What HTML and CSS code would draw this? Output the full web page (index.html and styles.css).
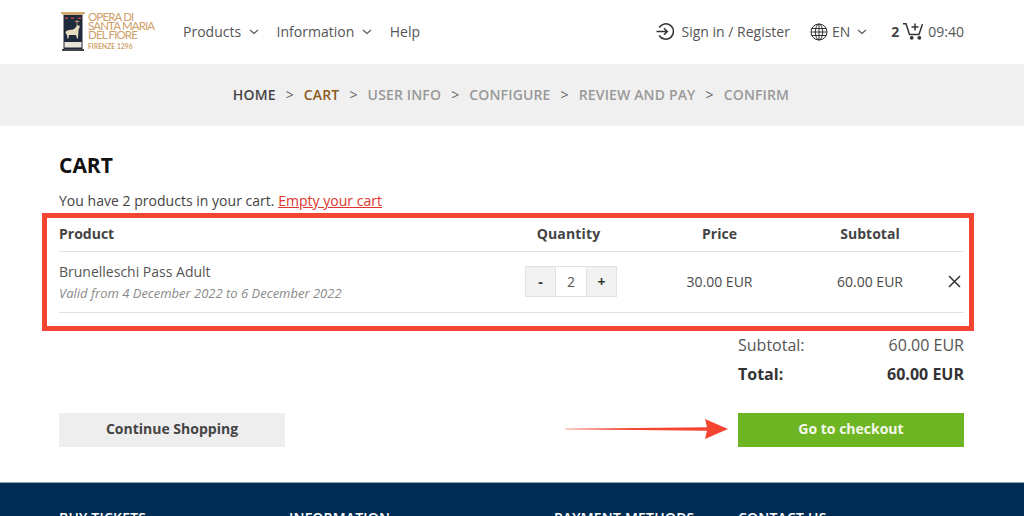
FILE: index.html
```html
<!DOCTYPE html>
<html lang="en">
<head>
<meta charset="utf-8">
<title>Cart</title>
<link rel="stylesheet" href="styles.css">
</head>
<body>
<header class="topbar">
  <a class="logo">
    <svg class="logo-mark" width="24" height="39" viewBox="0 0 24 39">
      <path d="M0 0H24V1.500L21.500 3H2.500L0 1.500Z" fill="#d3aa74"/>
      <rect x="2.500" y="3" width="19" height="34" fill="#1f2b3c"/>
      <rect x="4" y="5.500" width="3" height="1.500" fill="#b5483c"/>
      <rect x="10" y="5.500" width="3" height="1.500" fill="#b5483c"/>
      <rect x="17" y="5.500" width="3" height="1.500" fill="#b5483c"/>
      <path d="M4.500 21C5 17.500 9 18 12 17.500C14 17 15 15 16 13L19 14L17.500 18C17.500 21 17 24 17 26.500H16L15 23H8L7.500 26.500H6.500L6 23Z" fill="#e8dcc0"/>
      <path d="M16 13V8M14 9.500H18.500" stroke="#d3aa74" stroke-width=".8"/>
      <rect x="3.500" y="30" width="17" height="5.500" fill="#e9e4d8"/>
      <rect x="1" y="37" width="22" height="2" fill="#444"/>
    </svg>
    <span class="logo-text">
      <span class="logo-line">OPERA DI<br>SANTA MARIA<br>DEL FIORE</span>
      <span class="logo-year">FIRENZE 1296</span>
    </span>
  </a>
  <nav class="mainnav">
    <a class="navitem">Products <svg class="chev" width="10" height="6" viewBox="0 0 10 6"><path d="M1 1L5 4.500L9 1"/></svg></a>
    <a class="navitem">Information <svg class="chev" width="10" height="6" viewBox="0 0 10 6"><path d="M1 1L5 4.500L9 1"/></svg></a>
    <a class="navitem">Help</a>
  </nav>
  <div class="tools">
    <a class="tool signin">
      <svg width="18" height="17" viewBox="0 0 18 17" class="ico"><path d="M3.200 4.500A7.700 7.700 0 1 1 3.200 12.500"/><path d="M.5 8.500H11M8 5.300L11.300 8.500L8 11.700"/></svg>
      Sign in / Register
    </a>
    <a class="tool lang">
      <svg width="18" height="18" viewBox="0 0 18 18" class="ico thin"><circle cx="9" cy="9" r="8"/><ellipse cx="9" cy="9" rx="3.600" ry="8"/><path d="M9 1V17M1.800 5.500H16.200M1.800 12.500H16.200M1 9H17"/></svg>
      EN <svg class="chev" width="10" height="6" viewBox="0 0 10 6"><path d="M1 1L5 4.500L9 1"/></svg>
    </a>
    <a class="tool cart">
      <b class="cart-count">2</b>
      <svg width="20" height="17" viewBox="0 0 20 17" class="ico"><path d="M0 .8H3L6.500 11.500H16L19.500 1"/><path d="M12 .5V7.500M8.500 4H15.500"/><circle cx="8.700" cy="14.800" r="1.900" class="fill"/><circle cx="16.300" cy="14.800" r="1.900" class="fill"/></svg>
      <span>09:40</span>
    </a>
  </div>
</header>

<nav class="steps">
  <span class="step done">HOME</span><span class="sep">&gt;</span>
  <span class="step active">CART</span><span class="sep">&gt;</span>
  <span class="step">USER INFO</span><span class="sep">&gt;</span>
  <span class="step">CONFIGURE</span><span class="sep">&gt;</span>
  <span class="step">REVIEW AND PAY</span><span class="sep">&gt;</span>
  <span class="step">CONFIRM</span>
</nav>

<main class="content">
  <h1 class="title">CART</h1>
  <p class="intro">You have 2 products in your cart. <a class="empty">Empty your cart</a></p>
  <div class="table">
    <div class="row head">
      <div class="c-product">Product</div>
      <div class="c-qty">Quantity</div>
      <div class="c-price">Price</div>
      <div class="c-sub">Subtotal</div>
      <div class="c-x"></div>
    </div>
    <div class="row item">
      <div class="c-product">
        <div class="pname">Brunelleschi Pass Adult</div>
        <div class="pvalid">Valid from 4 December 2022 to 6 December 2022</div>
      </div>
      <div class="c-qty">
        <div class="stepper"><span class="qbtn">-</span><span class="qval">2</span><span class="qbtn">+</span></div>
      </div>
      <div class="c-price">30.00 EUR</div>
      <div class="c-sub">60.00 EUR</div>
      <div class="c-x"><svg width="13" height="13" viewBox="0 0 13 13" class="close"><path d="M1 1L12 12M12 1L1 12"/></svg></div>
    </div>
  </div>
  <div class="totals">
    <div class="total-row"><span>Subtotal:</span><span>60.00 EUR</span></div>
    <div class="total-row strong"><span>Total:</span><span>60.00 EUR</span></div>
  </div>
  <div class="actions">
    <a class="btn ghost">Continue Shopping</a>
    <a class="btn go">Go to checkout</a>
  </div>
</main>

<footer class="footer">
  <div class="fcol f1">BUY TICKETS</div>
  <div class="fcol f2">INFORMATION</div>
  <div class="fcol f3">PAYMENT METHODS</div>
  <div class="fcol f4">CONTACT US</div>
</footer>

<div class="callout"></div>
<svg class="arrow" width="164" height="20" viewBox="0 0 164 20"><path d="M0 9.700L142 8.300L140 0L163 10L140 20L142 11.700L0 10.300Z" fill="#f44532"/></svg>
</body>
</html>
```

FILE: styles.css
```css
* { box-sizing: border-box; }
html, body { margin: 0; height: 516px; overflow: hidden; background: #fff; }
body { font-family: "Open Sans", sans-serif; font-size: 14px; color: #4a4a4a; position: relative; }

.topbar { height: 64px; display: flex; align-items: center; padding: 0 60px 1px 61px; background: #fff; }
.logo { display: flex; align-items: center; width: 122px; gap: 3px; }
.logo-mark { flex: none; }
.logo-text { display: flex; flex-direction: column; font-family: "Lato", sans-serif; color: #cfa067; }
.logo-line { font-size: 11.500px; line-height: 9px; letter-spacing: -.85px; font-weight: 400; white-space: nowrap; }
.logo-year { font-size: 6.500px; line-height: 10px; letter-spacing: .15px; font-weight: 700; white-space: nowrap; margin-top: 3px; }
.mainnav { display: flex; align-items: center; gap: 17.500px; }
.navitem { display: flex; align-items: center; gap: 8px; color: #555; font-size: 14px; }
.chev { fill: none; stroke: #555; stroke-width: 1.100; }
.tools { margin-left: auto; display: flex; align-items: center; gap: 20px; color: #555; }
.tool { display: flex; align-items: center; }
.signin { gap: 8px; }
.lang { gap: 4px; margin-right: 4px; }
.lang .chev { margin-left: 3px; }
.cart { gap: 4px; }
.cart-count { font-weight: 700; color: #444; }
.cart span { margin-left: 1px; }
.ico { fill: none; stroke: #333; stroke-width: 1.500; }
.ico.thin { stroke-width: 1; }
.ico .fill { fill: #333; stroke: none; }

.steps { height: 62px; padding: 0 2px 1px 0; background: #f0f0f0; display: flex; align-items: center; justify-content: center; gap: 10px; font-size: 14px; font-weight: 600; color: #999; letter-spacing: .15px; }
.step.done { color: #444; }
.step.active { color: #8b5a1d; }
.sep { font-weight: 400; color: #666; }

.content { padding: 26px 60px 0 59px; height: 356px; }
.title { margin: 0; font-size: 21px; line-height: 27px; font-weight: 700; color: #111; }
.intro { margin: 12px 0 0; line-height: 20px; color: #444; letter-spacing: .02px; }
.empty { color: #e0342c; text-decoration: underline; }
.table { margin-top: 4px; }
.row { display: grid; grid-template-columns: 450px 119px 183px 118px 35px; align-items: center; border-bottom: 1px solid #e2e2e2; }
.head { height: 37px; font-weight: 700; color: #444; }
.head .c-qty { letter-spacing: .15px; }
.item { height: 61px; }
.c-product { text-align: left; }
.c-qty, .c-price, .c-sub { text-align: center; }
.item .c-qty { padding-left: 5px; }
.item .c-qty, .item .c-price, .item .c-sub, .item .c-x { padding-bottom: 2px; }
.pname { line-height: 20px; color: #555; }
.pvalid { font-size: 13px; line-height: 18px; margin-top: 2px; font-style: italic; color: #8a8a8a; }
.stepper { display: inline-flex; height: 31px; border: 1px solid #e2e2e2; align-items: center; vertical-align: middle; }
.qbtn { width: 29px; height: 29px; background: #f2f2f2; font-weight: 700; display: flex; align-items: center; justify-content: center; color: #333; }
.qval { width: 32px; height: 29px; display: flex; align-items: center; justify-content: center; border-left: 1px solid #e2e2e2; border-right: 1px solid #e2e2e2; color: #555; }
.c-x { display: flex; justify-content: flex-end; padding-right: 3px; }
.close { fill: none; stroke: #333; stroke-width: 1.500; }

.totals { margin: 18px 0 0 auto; width: 226px; }
.total-row { display: flex; justify-content: space-between; line-height: 29px; font-size: 16px; color: #555; height: 29px; }
.total-row.strong { font-weight: 700; color: #333; }
.actions { display: flex; justify-content: space-between; margin-top: 24px; }
.btn { width: 226px; height: 34px; display: flex; align-items: center; justify-content: center; font-weight: 700; padding-bottom: 3px; }
.ghost { background: #eee; color: #444; }
.go { background: #6eb524; color: #f4f8ea; }

.footer { height: 34px; background: #002d54; border-top: 1px solid #8aa2b6; overflow: hidden; display: flex; padding: 25px 0 0 59px; color: #fff; font-weight: 600; font-size: 14px; letter-spacing: .2px; line-height: 20px; }
.fcol { flex: none; }
.f1 { width: 230px; }
.f2 { width: 265px; }
.f3 { width: 184px; }

.callout { position: absolute; left: 42px; top: 213px; width: 932px; height: 118px; border: 5px solid #f44532; }
.arrow { position: absolute; left: 565px; top: 419px; }
```
